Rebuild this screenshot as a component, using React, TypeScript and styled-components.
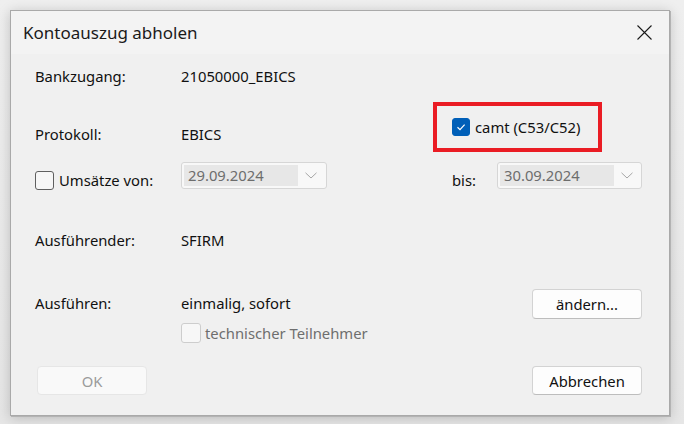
import React from "react";
import styled, { createGlobalStyle, css } from "styled-components";

const GlobalStyle = createGlobalStyle`
  html, body { margin: 0; padding: 0; background: #ebebeb; }
  body {
    width: 684px; height: 424px; overflow: hidden;
    font-family: "Noto Sans", "Open Sans", sans-serif;
    font-size: 14.8px; color: #111;
  }
`;

const Page = styled.div`
  width: 684px; height: 424px; box-sizing: border-box;
  padding: 10px 0 0 10px;
  background: linear-gradient(180deg, #efefef 0%, #e6e6e6 100%);
`;

const Window = styled.div`
  width: 660px; height: 406px; box-sizing: border-box;
  border: 1px solid #a9a9a9;
  background: #f0f0f0;
  display: flex; flex-direction: column;
  box-shadow: 1px 1px 0 #b3b3b3, 0 2px 12px rgba(0, 0, 0, 0.2);
`;

const TitleBar = styled.div`
  height: 43px; flex: none;
  background: #f3f3f3;
  display: flex; align-items: center; justify-content: space-between;
  padding: 0 17px 0 12px;
`;

const Title = styled.div`
  font-size: 17px; color: #1a1a1a; line-height: 22px;
`;

const CloseBtn = styled.div`
  width: 15px; height: 15px; display: flex;
`;

const Body = styled.div`
  flex: 1; display: flex; flex-direction: column;
  padding: 0 27px 0 24px;
`;

const Row = styled.div<{ $mt: number; $align?: string }>`
  display: flex;
  align-items: ${(p) => p.$align || "center"};
  margin-top: ${(p) => p.$mt}px;
`;

const Cell = styled.div<{ $w?: number; $mb?: number; $pt?: number; $muted?: boolean }>`
  ${(p) => (p.$w ? css`width: ${p.$w}px; flex: none;` : "")}
  line-height: 20px;
  white-space: nowrap;
  margin-bottom: ${(p) => p.$mb || 0}px;
  padding-top: ${(p) => p.$pt || 0}px;
  color: ${(p) => (p.$muted ? "#6e6e6e" : "#111")};
`;

const Stack = styled.div<{ $w: number }>`
  width: ${(p) => p.$w}px; flex: none;
  display: flex; flex-direction: column; gap: 10px;
  padding-top: 4px;
`;

const CheckRow = styled.label<{ $w?: number; $gap: number }>`
  display: flex; align-items: center; gap: ${(p) => p.$gap}px;
  ${(p) => (p.$w ? css`width: ${p.$w}px; flex: none;` : "")}
  line-height: 20px; white-space: nowrap;
`;

const Box = styled.span<{ $kind: "on" | "off" | "disabled"; $size: number }>`
  width: ${(p) => p.$size}px; height: ${(p) => p.$size}px;
  box-sizing: border-box; border-radius: 3px; flex: none;
  display: flex; align-items: center; justify-content: center;
  ${(p) =>
    p.$kind === "on"
      ? css`background: #005fb8; border: 1px solid #005fb8;`
      : p.$kind === "off"
      ? css`background: #f6f6f6; border: 1px solid #5f5f5f;`
      : css`background: #f7f7f7; border: 1px solid #cdcdcd;`}
`;

const RedBox = styled.div`
  width: 169px; height: 50px; box-sizing: border-box;
  border: 4px solid #ea1c24;
  display: flex; align-items: center;
  padding-left: 15px;
`;

const Combo = styled.div<{ $w: number }>`
  width: ${(p) => p.$w}px; height: 27px; box-sizing: border-box; flex: none;
  border: 1px solid #d6d6d6; border-radius: 3px;
  background: #f8f8f8;
  padding: 2px;
  display: flex; align-items: center;
  margin-bottom: 1px;
`;

const ComboText = styled.div`
  width: 114px; height: 21px; box-sizing: border-box;
  background: #e7e7e7; color: #6d6d6d;
  padding-left: 4px; line-height: 21px;
`;

const Chevron = styled.div`
  flex: 1; display: flex; align-items: center; justify-content: center;
`;

const Buttons = styled.div`
  display: flex; justify-content: space-between; align-items: center;
  margin-top: 23px; padding-left: 2px;
`;

const Button = styled.button<{ $h: number }>`
  width: 110px; height: ${(p) => p.$h}px; box-sizing: border-box; flex: none;
  font-family: inherit; font-size: 14.8px; line-height: 20px;
  border-radius: 4px; padding: 0;
  background: #fdfdfd; color: #111;
  border: 1px solid #d3d3d3; border-bottom-color: #bdbdbd;
  &:disabled {
    background: #f9f9f9; color: #9b9b9b;
    border-color: #e6e6e6;
  }
`;

function Check({ kind, size }: { kind: "on" | "off" | "disabled"; size: number }) {
  return (
    <Box $kind={kind} $size={size}>
      {kind === "on" && (
        <svg width="12" height="12" viewBox="0 0 12 12">
          <polyline points="2.5,6.2 5,8.6 9.6,3.6" fill="none" stroke="#fff" strokeWidth="1.2" />
        </svg>
      )}
    </Box>
  );
}

function DateCombo({ w, value }: { w: number; value: string }) {
  return (
    <Combo $w={w}>
      <ComboText>{value}</ComboText>
      <Chevron>
        <svg width="12" height="7" viewBox="0 0 12 7">
          <polyline points="0.5,0.8 6,6 11.5,0.8" fill="none" stroke="#a6a6a6" strokeWidth="1" />
        </svg>
      </Chevron>
    </Combo>
  );
}

export default function App() {
  return (
    <>
      <GlobalStyle />
      <Page>
        <Window>
          <TitleBar>
            <Title>Kontoauszug abholen</Title>
            <CloseBtn>
              <svg width="15" height="15" viewBox="0 0 15 15">
                <path d="M0.5 0.5 L14.5 14.5 M14.5 0.5 L0.5 14.5" stroke="#1a1a1a" strokeWidth="1.1" />
              </svg>
            </CloseBtn>
          </TitleBar>
          <Body>
            <Row $mt={12}>
              <Cell $w={146}>Bankzugang:</Cell>
              <Cell>21050000_EBICS</Cell>
            </Row>
            <Row $mt={16} $align="flex-end">
              <Cell $w={146} $mb={8}>Protokoll:</Cell>
              <Cell $w={252} $mb={8}>EBICS</Cell>
              <RedBox>
                <CheckRow $gap={5}>
                  <Check kind="on" size={18} />
                  camt (C53/C52)
                </CheckRow>
              </RedBox>
            </Row>
            <Row $mt={10} $align="flex-end">
              <CheckRow $w={146} $gap={5}>
                <Check kind="off" size={19} />
                Umsätze von:
              </CheckRow>
              <Cell $w={271}>
                <DateCombo w={146} value="29.09.2024" />
              </Cell>
              <Cell $w={45}>bis:</Cell>
              <DateCombo w={145} value="30.09.2024" />
            </Row>
            <Row $mt={40}>
              <Cell $w={146}>Ausführender:</Cell>
              <Cell>SFIRM</Cell>
            </Row>
            <Row $mt={39} $align="flex-start">
              <Cell $w={146} $pt={4}>Ausführen:</Cell>
              <Stack $w={351}>
                <Cell>einmalig, sofort</Cell>
                <CheckRow $gap={4} style={{ color: "#6e6e6e" }}>
                  <Check kind="disabled" size={20} />
                  technischer Teilnehmer
                </CheckRow>
              </Stack>
              <Button $h={30}>ändern...</Button>
            </Row>
            <Buttons>
              <Button $h={29} disabled>OK</Button>
              <Button $h={29}>Abbrechen</Button>
            </Buttons>
          </Body>
        </Window>
      </Page>
    </>
  );
}
